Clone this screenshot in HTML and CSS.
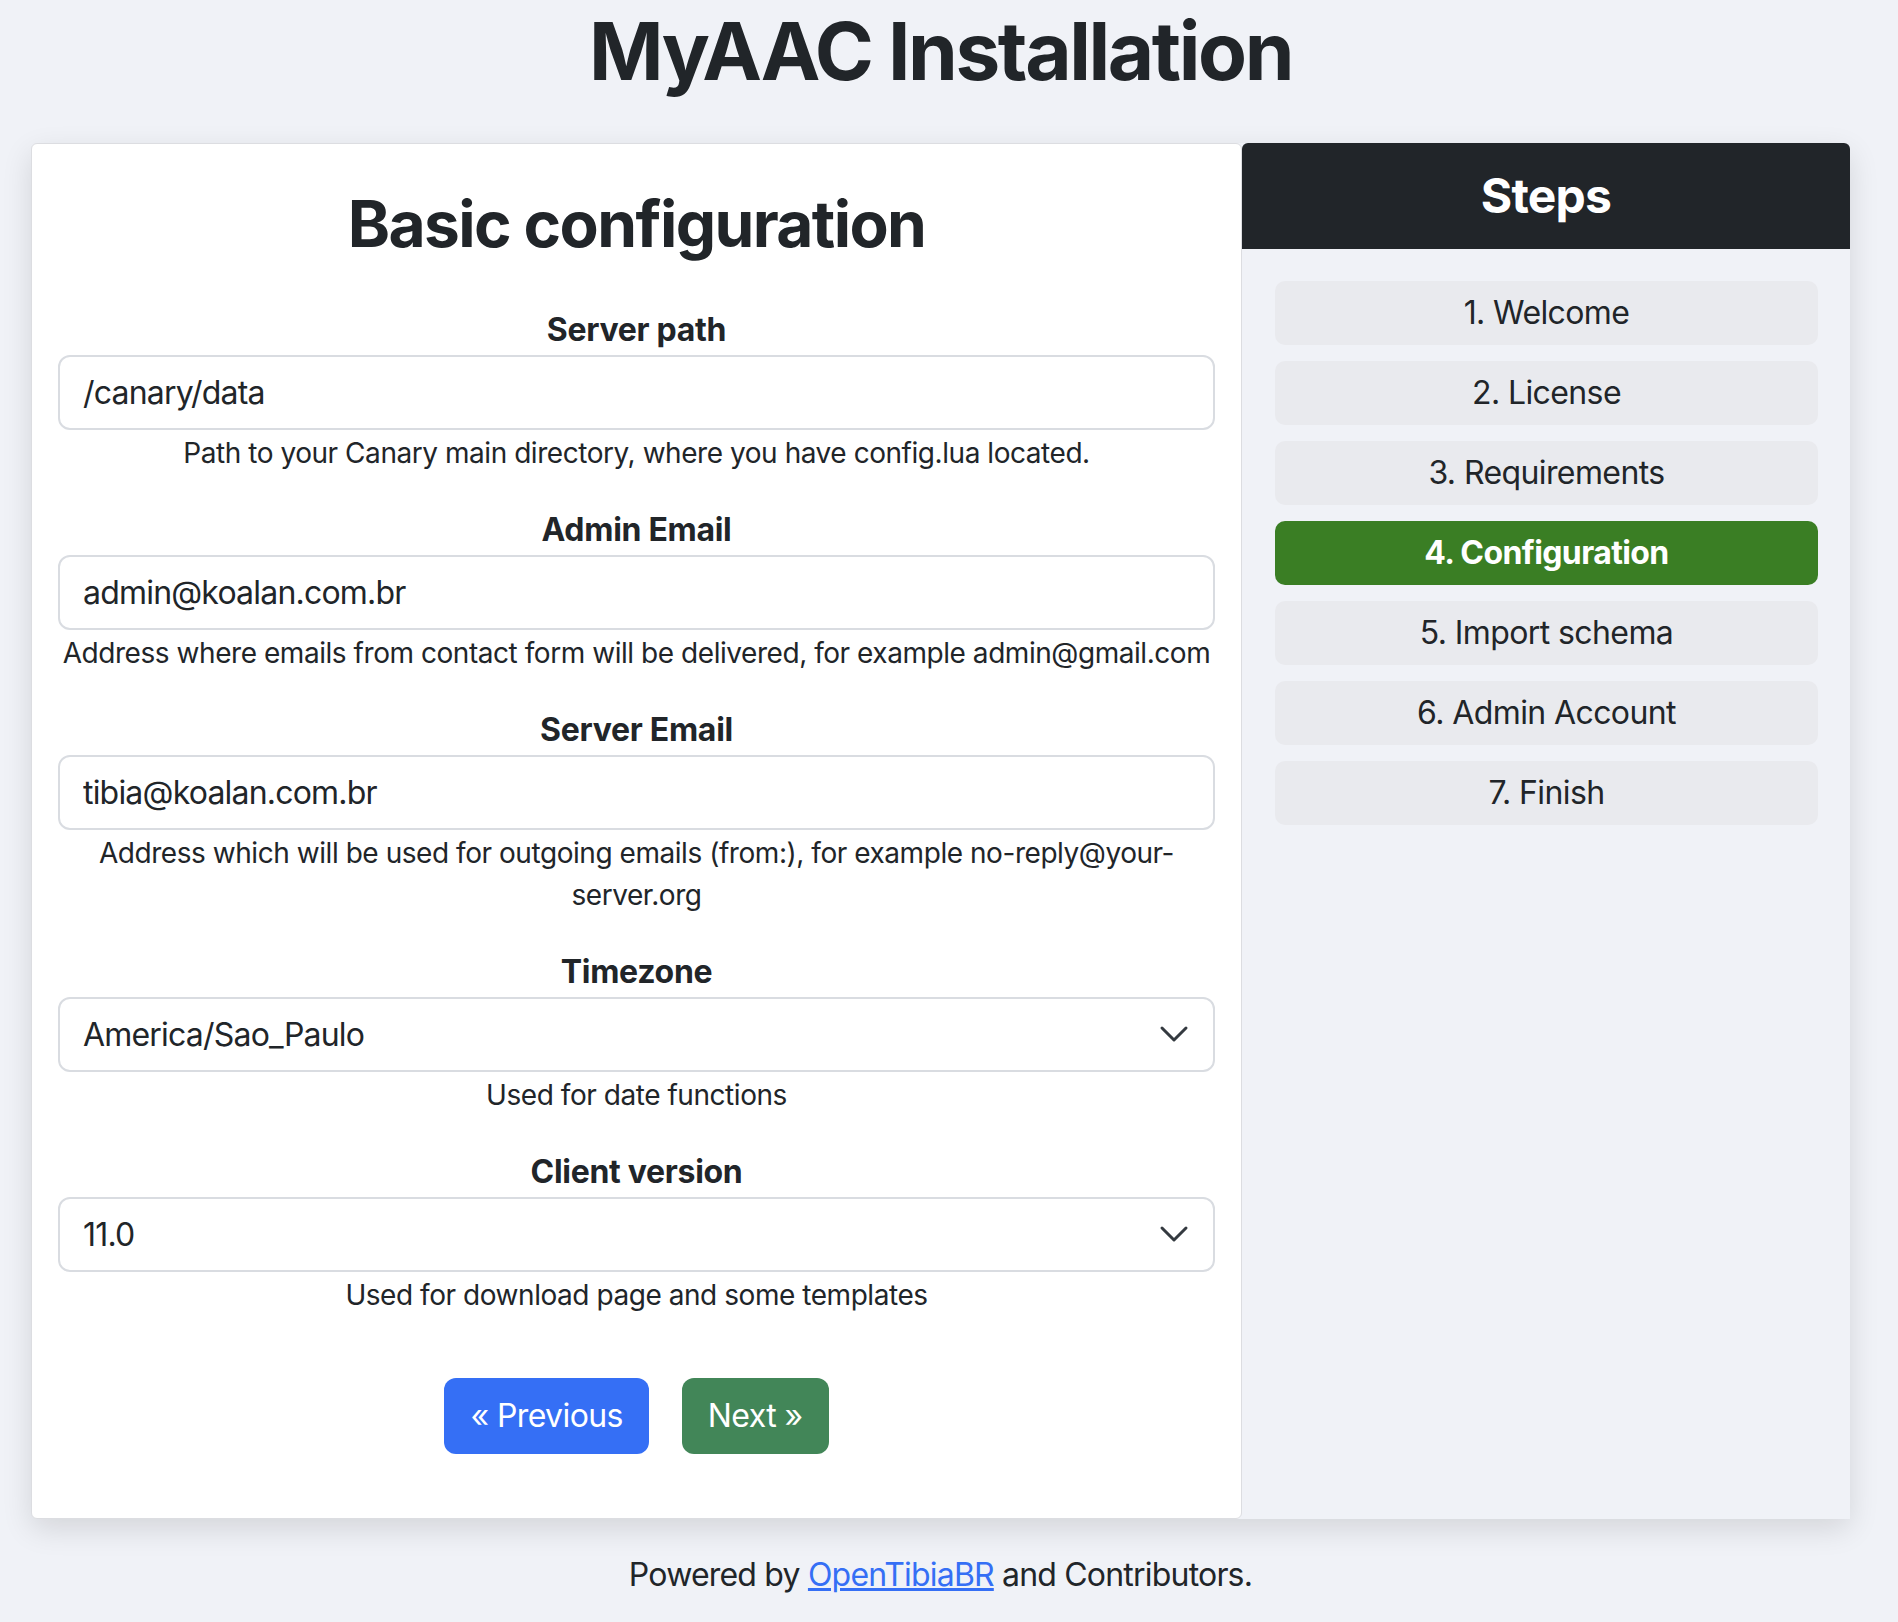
FILE: index.html
```html
<!DOCTYPE html>
<html lang="en">
<head>
<meta charset="utf-8">
<title>MyAAC Installation</title>
<link rel="stylesheet" href="styles.css">
</head>
<body>
<div class="page">
  <h1 class="title">MyAAC Installation</h1>
  <div class="row">
    <div class="card">
      <h2 class="card-title">Basic configuration</h2>
      <form class="form">
        <div class="field">
          <label class="label">Server path</label>
          <input class="input" type="text" value="/canary/data">
          <div class="help">Path to your Canary main directory, where you have config.lua located.</div>
        </div>
        <div class="field">
          <label class="label">Admin Email</label>
          <input class="input" type="text" value="admin@koalan.com.br">
          <div class="help">Address where emails from contact form will be delivered, for example admin@gmail.com</div>
        </div>
        <div class="field">
          <label class="label">Server Email</label>
          <input class="input" type="text" value="tibia@koalan.com.br">
          <div class="help help-narrow">Address which will be used for outgoing emails (from:), for example no-reply@your-server.org</div>
        </div>
        <div class="field">
          <label class="label">Timezone</label>
          <div class="select-wrap">
            <select class="input select"><option>America/Sao_Paulo</option></select>
            <svg class="chev" viewBox="0 0 16 16" width="32" height="32"><path d="M2 5l6 6 6-6" fill="none" stroke="#343a40" stroke-width="1.5" stroke-linecap="round" stroke-linejoin="round"/></svg>
          </div>
          <div class="help">Used for date functions</div>
        </div>
        <div class="field">
          <label class="label">Client version</label>
          <div class="select-wrap">
            <select class="input select"><option>11.0</option></select>
            <svg class="chev" viewBox="0 0 16 16" width="32" height="32"><path d="M2 5l6 6 6-6" fill="none" stroke="#343a40" stroke-width="1.5" stroke-linecap="round" stroke-linejoin="round"/></svg>
          </div>
          <div class="help">Used for download page and some templates</div>
        </div>
        <div class="buttons">
          <button type="button" class="btn btn-prev">« Previous</button>
          <button type="button" class="btn btn-next">Next »</button>
        </div>
      </form>
    </div>
    <div class="steps">
      <div class="steps-header">Steps</div>
      <div class="steps-list">
        <div class="step">1. Welcome</div>
        <div class="step">2. License</div>
        <div class="step">3. Requirements</div>
        <div class="step step-active">4. Configuration</div>
        <div class="step">5. Import schema</div>
        <div class="step">6. Admin Account</div>
        <div class="step">7. Finish</div>
      </div>
    </div>
  </div>
  <p class="footer">Powered by <a href="#" class="link">OpenTibiaBR</a> and Contributors.</p>
</div>
</body>
</html>
```

FILE: styles.css
```css
* { box-sizing: border-box; }
html, body { margin: 0; padding: 0; }
body {
  background: #f0f2f7;
  font-family: Inter, "Noto Sans", "Liberation Sans", sans-serif;
  color: #212529;
  font-size: 32px;
  line-height: 1.5;
}
.page {
  width: 1819px;
  margin-left: 31px;
}
.title {
  margin: 3px 0 0;
  font-size: 80px;
  line-height: 96px;
  font-weight: 700;
  text-align: center;
  letter-spacing: -2.4px;
}
.row {
  margin-top: 44px;
  display: grid;
  grid-template-columns: 1211px 608px;
  box-shadow: 0 10px 30px rgba(0,0,0,0.12);
  border-radius: 8px;
}
.card {
  background: #fff;
  border: 1px solid #dcdde1;
  border-radius: 6px;
  padding: 42px 26px 64px;
}
.card-title {
  margin: 0 0 46px;
  font-size: 64px;
  line-height: 76.8px;
  font-weight: 700;
  text-align: center;
  letter-spacing: -1.6px;
}
.form { margin: 0; }
.field {
  display: flex;
  flex-direction: column;
  margin-bottom: 35px;
}
.label {
  font-size: 32px;
  line-height: 42px;
  font-weight: 700;
  text-align: center;
  margin-bottom: 4px;
  letter-spacing: -0.3px;
}
.input {
  display: block;
  width: 100%;
  height: 75px;
  border: 2px solid #d9dce1;
  border-radius: 12px;
  background: #fff;
  padding: 0 23px;
  font-family: inherit;
  font-size: 32px;
  color: #212529;
  outline: none;
  letter-spacing: -0.8px;
}
.select-wrap { position: relative; }
.select {
  appearance: none;
  -webkit-appearance: none;
  padding-right: 72px;
}
.chev {
  position: absolute;
  right: 25px;
  top: 21px;
  pointer-events: none;
}
.help {
  margin-top: 2px;
  font-size: 28px;
  line-height: 42px;
  text-align: center;
  letter-spacing: -0.45px;
}
.help-narrow { padding: 0 36px; }
.buttons {
  display: flex;
  justify-content: center;
  gap: 33px;
  margin-top: 62px;
}
.btn {
  height: 76px;
  border: none;
  border-radius: 12px;
  padding: 0 26px;
  font-family: inherit;
  font-size: 32px;
  line-height: 48px;
  color: #fff;
  cursor: pointer;
  white-space: nowrap;
  letter-spacing: -0.6px;
}
.btn-prev { background: #356ff5; }
.btn-next { background: #428658; }
.steps {
  background: #f0f2f7;
  border-radius: 8px 8px 0 0;
}
.steps-header {
  background: #212529;
  color: #fff;
  border-radius: 6px 6px 0 0;
  padding: 24px 0;
  font-size: 48px;
  line-height: 57.6px;
  font-weight: 700;
  text-align: center;
  letter-spacing: -0.8px;
}
.steps-list {
  display: flex;
  flex-direction: column;
  gap: 16px;
  padding: 32px 32px 0 33px;
}
.step {
  background: #e9eaee;
  border-radius: 10px;
  padding: 8px 0;
  font-size: 32px;
  line-height: 48px;
  text-align: center;
  letter-spacing: -0.6px;
}
.step-active {
  background: #3a7e24;
  color: #fff;
  font-weight: 700;
}
.footer {
  margin: 32px 0 0;
  text-align: center;
  font-size: 32px;
  line-height: 48px;
  letter-spacing: -0.8px;
}
.link { color: #356ff5; text-decoration: underline; }
```
